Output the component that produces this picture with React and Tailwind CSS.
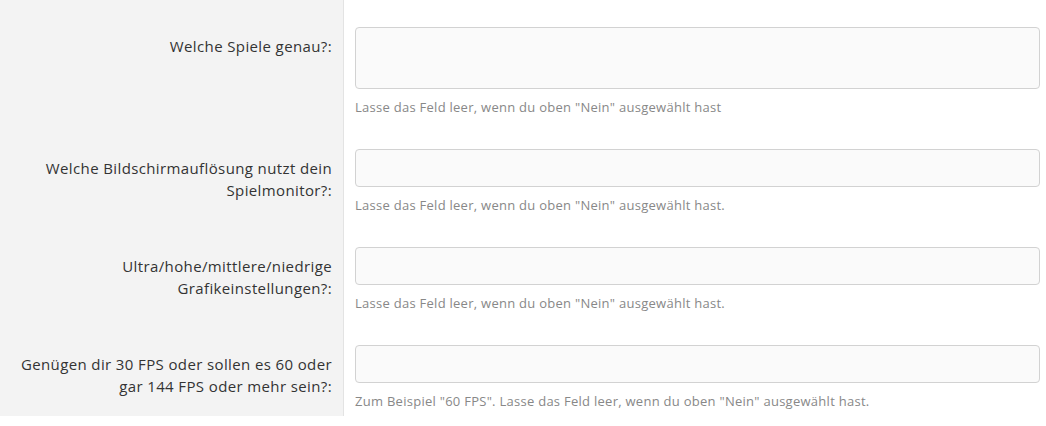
import React from "react";

const rows = [
  { label: "Welche Spiele genau?:", help: 'Lasse das Feld leer, wenn du oben "Nein" ausgewählt hast', tall: true },
  { label: "Welche Bildschirmauflösung nutzt dein Spielmonitor?:", help: 'Lasse das Feld leer, wenn du oben "Nein" ausgewählt hast.' },
  { label: "Ultra/hohe/mittlere/niedrige Grafikeinstellungen?:", help: 'Lasse das Feld leer, wenn du oben "Nein" ausgewählt hast.' },
  { label: "Genügen dir 30 FPS oder sollen es 60 oder gar 144 FPS oder mehr sein?:", help: 'Zum Beispiel "60 FPS". Lasse das Feld leer, wenn du oben "Nein" ausgewählt hast.' },
];

export default function App() {
  return (
    <div className="w-[1046px] h-[426px] overflow-hidden bg-white font-['Open_Sans',sans-serif]">
      {rows.map((r, i) => (
        <div key={i} className="flex">
          <div className="w-[344px] shrink-0 bg-[#f3f3f3] border-r border-[#e3e3e3] pl-[12px] pr-[11px] pt-[35px] text-right text-[15px] tracking-[0.38px] leading-[22px] text-[#333]">
            {r.label}
          </div>
          <div className="flex-1 pl-[11px] pr-[6px] pt-[27px] pb-[6px]">
            {r.tall ? (
              <textarea className="block w-full h-[62px] rounded-[4px] border border-[#d2d2d2] bg-[#fafafa] resize-none outline-none" />
            ) : (
              <input className="block w-full h-[38px] rounded-[4px] border border-[#d2d2d2] bg-[#fafafa] outline-none" />
            )}
            <div className="mt-[10px] text-[13px] tracking-[0.27px] leading-[17px] text-[#888]">{r.help}</div>
          </div>
        </div>
      ))}
    </div>
  );
}
